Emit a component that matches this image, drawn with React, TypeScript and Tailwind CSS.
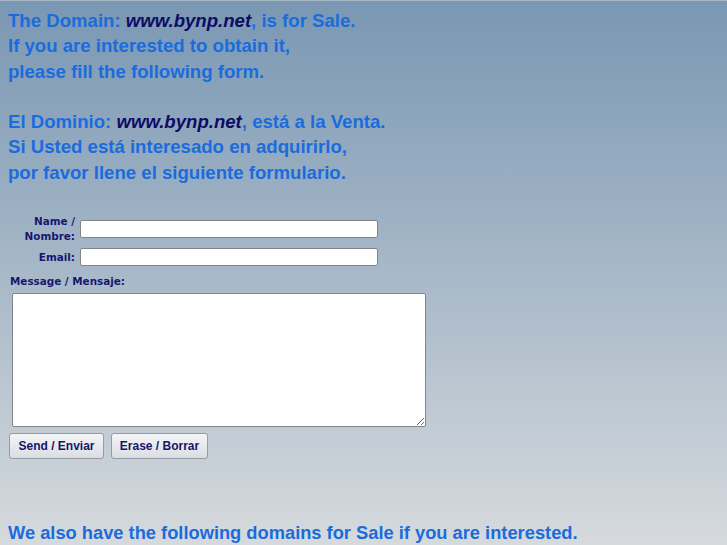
export default function App() {
  const blue = "text-[#1a6cdd]";
  return (
    <div className="min-h-screen border-t border-[#aab7c5] bg-gradient-to-b from-[#7a97b3] to-[#d6dadd] pl-[8px] pt-[7px] font-['Liberation_Sans',Arial,sans-serif]">
      <div className={`text-[18.6px] font-bold leading-[25.3px] ${blue}`}>
        The Domain: <i className="text-[#0c0c66]">www.bynp.net</i>, is for Sale.
        <br />
        If you are interested to obtain it,
        <br />
        please fill the following form.
        <br />
        <br />
        El Dominio: <i className="text-[#0c0c66]">www.bynp.net</i>, está a la Venta.
        <br />
        Si Usted está interesado en adquirirlo,
        <br />
        por favor llene el siguiente formulario.
      </div>

      <form className="mt-[29px] text-[#17176e]">
        <div className="flex items-center gap-[5px]">
          <label className="w-[67px] text-right font-['DejaVu_Sans',Verdana,sans-serif] text-[10.4px] font-bold leading-[15px]">
            Name /
            <br />
            Nombre:
          </label>
          <input className="h-[18px] w-[298px] rounded-[2px] border border-[#80858c] bg-white px-1 text-[13px] outline-none" />
        </div>
        <div className="mt-[4px] flex items-center gap-[5px]">
          <label className="w-[67px] text-right font-['DejaVu_Sans',Verdana,sans-serif] text-[10.4px] font-bold leading-[15px]">
            Email:
          </label>
          <input className="h-[18px] w-[298px] rounded-[2px] border border-[#80858c] bg-white px-1 text-[13px] outline-none" />
        </div>
        <div className="mt-[8px] pl-[2px] font-['DejaVu_Sans',Verdana,sans-serif] text-[10.4px] font-bold leading-[15px]">
          Message / Mensaje:
        </div>
        <textarea className="mt-[4px] ml-[4px] block h-[134px] w-[414px] rounded-[2px] border border-[#80858c] bg-white p-1 text-[13px] outline-none" />
        <div className="mt-[6px] flex gap-[7px] pl-[1px]">
          <button
            type="submit"
            className="h-[26px] w-[95px] rounded-[3px] border border-[#979ca3] bg-gradient-to-b from-[#f4f5f7] to-[#dadde2] text-[12px] font-bold text-[#15156c]"
          >
            Send / Enviar
          </button>
          <button
            type="reset"
            className="h-[26px] w-[97px] rounded-[3px] border border-[#979ca3] bg-gradient-to-b from-[#f4f5f7] to-[#dadde2] text-[12px] font-bold text-[#15156c]"
          >
            Erase / Borrar
          </button>
        </div>
      </form>

      <p className={`mt-[61px] text-[18.3px] font-bold leading-[25.3px] ${blue}`}>
        We also have the following domains for Sale if you are interested.
      </p>
    </div>
  );
}
